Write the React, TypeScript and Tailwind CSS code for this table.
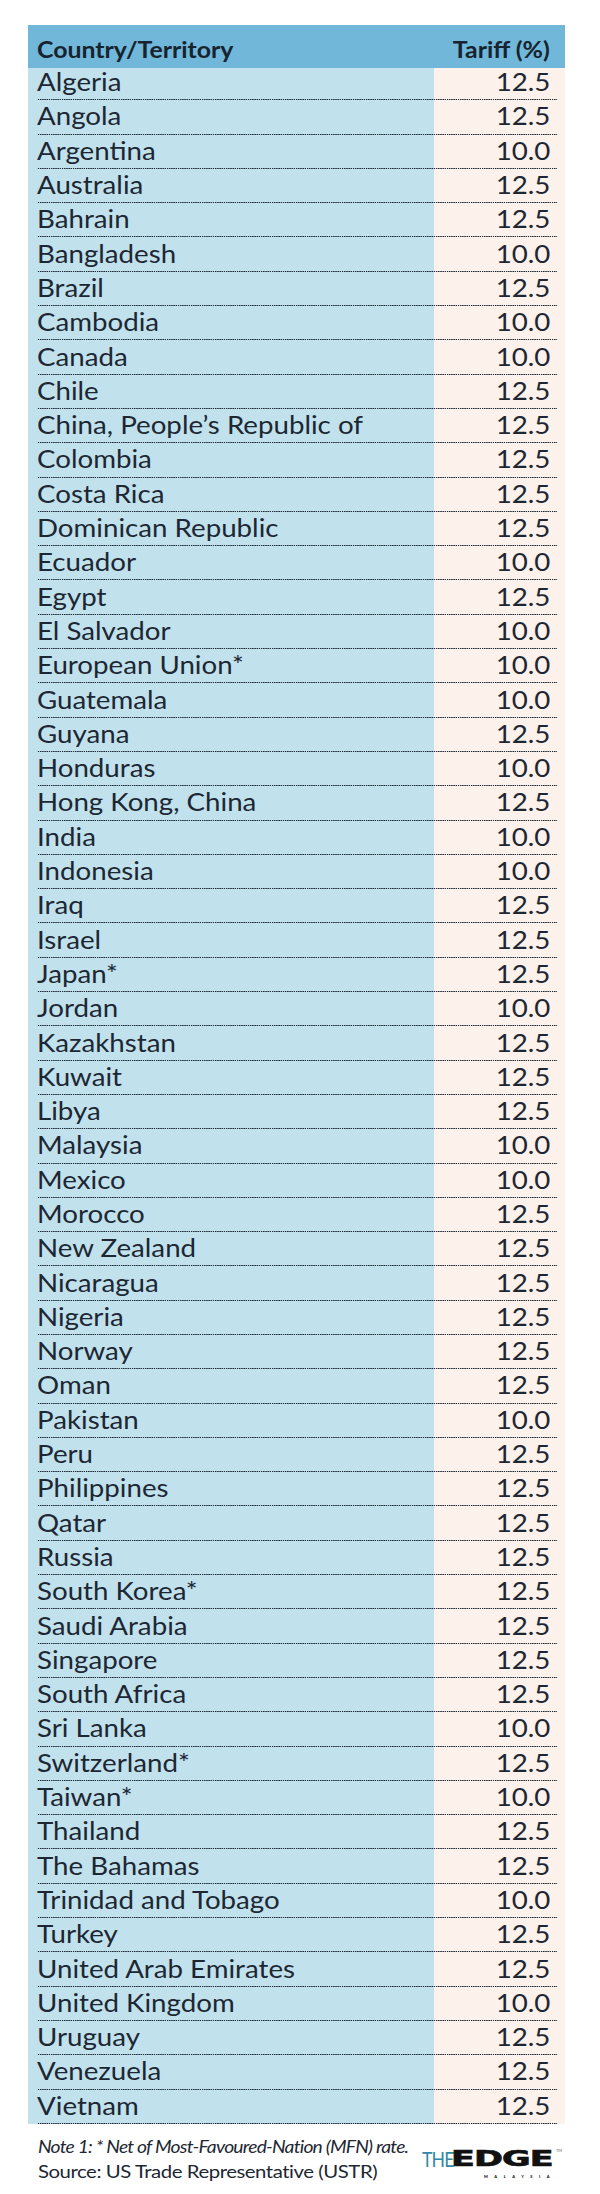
const rows: [string, string][] = [
  ["Algeria", "12.5"],
  ["Angola", "12.5"],
  ["Argentina", "10.0"],
  ["Australia", "12.5"],
  ["Bahrain", "12.5"],
  ["Bangladesh", "10.0"],
  ["Brazil", "12.5"],
  ["Cambodia", "10.0"],
  ["Canada", "10.0"],
  ["Chile", "12.5"],
  ["China, People\u2019s Republic of", "12.5"],
  ["Colombia", "12.5"],
  ["Costa Rica", "12.5"],
  ["Dominican Republic", "12.5"],
  ["Ecuador", "10.0"],
  ["Egypt", "12.5"],
  ["El Salvador", "10.0"],
  ["European Union*", "10.0"],
  ["Guatemala", "10.0"],
  ["Guyana", "12.5"],
  ["Honduras", "10.0"],
  ["Hong Kong, China", "12.5"],
  ["India", "10.0"],
  ["Indonesia", "10.0"],
  ["Iraq", "12.5"],
  ["Israel", "12.5"],
  ["Japan*", "12.5"],
  ["Jordan", "10.0"],
  ["Kazakhstan", "12.5"],
  ["Kuwait", "12.5"],
  ["Libya", "12.5"],
  ["Malaysia", "10.0"],
  ["Mexico", "10.0"],
  ["Morocco", "12.5"],
  ["New Zealand", "12.5"],
  ["Nicaragua", "12.5"],
  ["Nigeria", "12.5"],
  ["Norway", "12.5"],
  ["Oman", "12.5"],
  ["Pakistan", "10.0"],
  ["Peru", "12.5"],
  ["Philippines", "12.5"],
  ["Qatar", "12.5"],
  ["Russia", "12.5"],
  ["South Korea*", "12.5"],
  ["Saudi Arabia", "12.5"],
  ["Singapore", "12.5"],
  ["South Africa", "12.5"],
  ["Sri Lanka", "10.0"],
  ["Switzerland*", "12.5"],
  ["Taiwan*", "10.0"],
  ["Thailand", "12.5"],
  ["The Bahamas", "12.5"],
  ["Trinidad and Tobago", "10.0"],
  ["Turkey", "12.5"],
  ["United Arab Emirates", "12.5"],
  ["United Kingdom", "10.0"],
  ["Uruguay", "12.5"],
  ["Venezuela", "12.5"],
  ["Vietnam", "12.5"],
];

// the artwork's type is set a little wide, so stretch it sideways
function Wide({ children, right }: { children: React.ReactNode; right?: boolean }) {
  return (
    <span
      className={
        "inline-block whitespace-nowrap scale-x-[1.13] " + (right ? "origin-right" : "origin-left")
      }
    >
      {children}
    </span>
  );
}

function Logo() {
  return (
    <div className="flex flex-col items-end pb-[5px]">
      <div className="flex items-start leading-none">
        <span className="inline-block w-[29px]">
          <span className="inline-block origin-left scale-x-[0.82] text-[21.5px] font-normal tracking-[-1px] text-[#2f89a6]">
            THE
          </span>
        </span>
        <span className="inline-block w-[106px]">
          <span className="inline-block origin-left scale-x-[1.7] font-['DejaVu_Sans',sans-serif] text-[20.5px] font-bold tracking-[-0.5px] text-[#111] [-webkit-text-stroke:0.7px_#111]">
            EDGE
          </span>
        </span>
        <span className="-ml-[1px] text-[4px] text-[#666]">TM</span>
      </div>
      <div className="mr-[6px] mt-[5px] text-[4px] font-black leading-none tracking-[6.5px] text-[#111]">
        MALAYSIA
      </div>
    </div>
  );
}

export default function App() {
  return (
    <main className="min-h-[2194px] bg-white pt-[25px] font-['Lato',sans-serif] text-[#1d2733]">
      <div className="ml-[28px] w-[537px]">
        <div className="flex h-[43px] items-start justify-between bg-[#70b7d9] pl-[9px] pr-[15px] pt-[14px] text-[22px] font-bold leading-none text-[#17232e]">
          <Wide>Country/Territory</Wide>
          <Wide right>Tariff (%)</Wide>
        </div>

        {rows.map(([name, rate], i) => (
          <div
            key={name}
            className={
              "bg-[linear-gradient(to_right,#c1e1ec_406px,#fcf1eb_406px)] pl-[9px] pr-[8px] " +
              (i === 0 ? "h-[32.7px]" : "h-[34.3px]")
            }
          >
            <div className="flex h-full items-end justify-between bg-[linear-gradient(to_right,#1d2733_50%,transparent_50%)] bg-[length:2.2px_1.4px] bg-bottom bg-repeat-x pb-[6px] pr-[7px] text-[24.5px] leading-none">
              <Wide>{name}</Wide>
              <Wide right>{rate}</Wide>
            </div>
          </div>
        ))}

        <div className="flex items-end justify-between pl-[10px] pr-[3px] pt-[10px]">
          <div className="text-[18px] leading-[25px] text-[#1d2733]">
            <div className="italic tracking-[-0.73px]">
              <span className="inline-block origin-left scale-x-[1.07] whitespace-nowrap">
                Note 1: * Net of Most-Favoured-Nation (MFN) rate.
              </span>
            </div>
            <div className="tracking-[-0.4px]">
              <Wide>Source: US Trade Representative (USTR)</Wide>
            </div>
          </div>
          <Logo />
        </div>
      </div>
    </main>
  );
}
